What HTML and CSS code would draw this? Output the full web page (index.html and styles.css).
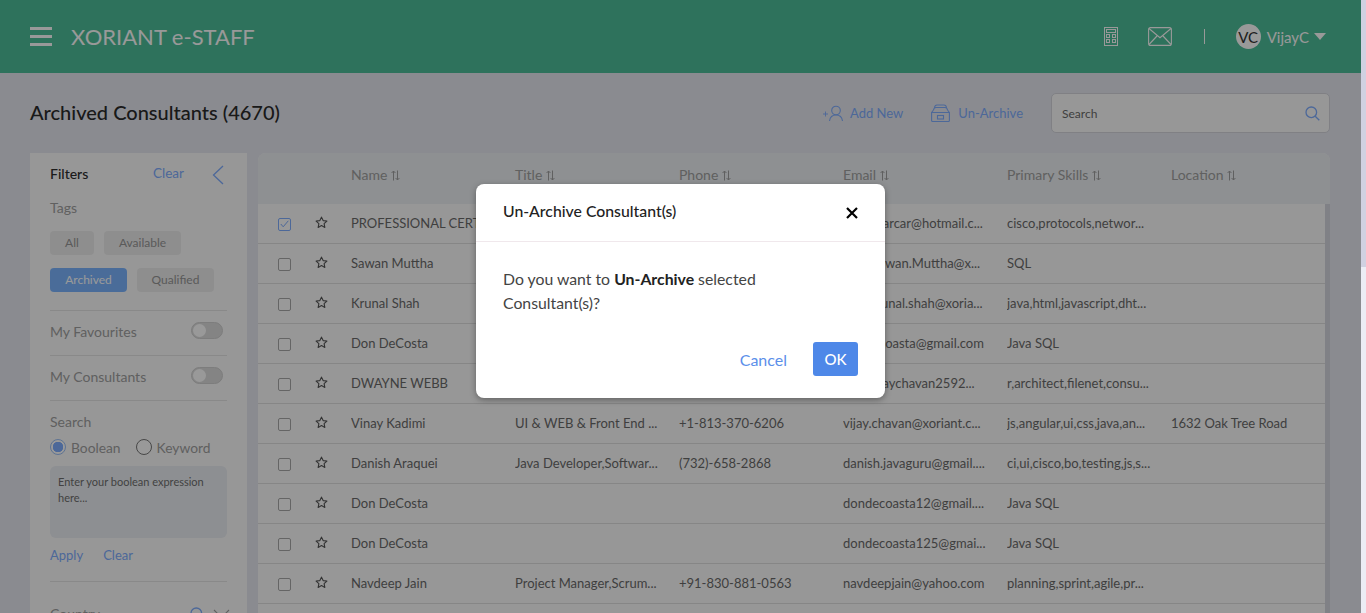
FILE: index.html
```html
<!DOCTYPE html>
<html lang="en">
<head>
<meta charset="utf-8">
<title>Archived Consultants</title>
<link rel="stylesheet" href="styles.css">
</head>
<body>
<svg class="defs" width="0" height="0" aria-hidden="true">
  <symbol id="star" viewBox="0 0 14 14"><path d="M7 1.2l1.75 3.75 4.05.5-3 2.8.8 4.05L7 10.3l-3.6 2 .8-4.05-3-2.8 4.05-.5z" fill="none" stroke="currentColor" stroke-width="1.2" stroke-linejoin="round"/></symbol>
  <symbol id="sort" viewBox="0 0 9 11"><path d="M2.5 10.5V1M.6 3L2.5 1l1.9 2M6.5.5V10M4.6 8l1.9 2 1.9-2" fill="none" stroke="currentColor" stroke-width="1"/></symbol>
</svg>
<div class="frame">
  <div class="main">
    <header class="topbar">
      <div class="burger"><span></span><span></span><span></span></div>
      <div class="brand">XORIANT e-STAFF</div>
      <div class="top-actions">
        <svg class="calc" width="14" height="19" viewBox="0 0 14 19"><g fill="none" stroke="currentColor"><rect x=".5" y=".5" width="13" height="18"/><rect x="2.5" y="2.5" width="9" height="3"/><rect x="2.5" y="7.5" width="3" height="3"/><rect x="8.5" y="7.5" width="3" height="3"/><rect x="2.5" y="12.5" width="3" height="3"/><rect x="8.5" y="12.5" width="3" height="3"/></g></svg>
        <svg class="mail" width="24" height="19" viewBox="0 0 24 19"><g fill="none" stroke="currentColor" stroke-width="1.1"><rect x=".6" y=".6" width="22.8" height="17.8" rx="2"/><path d="M1 1.5l11 9.2 11-9.2M1 17.5l8-8.5M23 17.5l-8-8.5"/></g></svg>
        <span class="sep"></span>
        <span class="avatar">VC</span>
        <span class="user">VijayC</span>
        <span class="caret"></span>
      </div>
    </header>

    <section class="titlebar">
      <h1>Archived Consultants (4670)</h1>
      <div class="tools">
        <a class="tool tool-add">
          <svg width="23" height="17" viewBox="0 0 23 17"><g fill="none" stroke="currentColor" stroke-width="1.1"><path d="M0 9h5M2.500 6.500v5" stroke-width=".9"/><circle cx="13" cy="5.5" r="4.3"/><path d="M6.5 16c.5-4 3-6 6.5-6s6 2 6.5 6"/></g></svg>
          <span>Add New</span>
        </a>
        <a class="tool tool-arch">
          <svg width="19" height="18" viewBox="0 0 19 18"><g fill="none" stroke="currentColor" stroke-width="1.1"><path d="M3.5 3.5C3.8 1.7 4.5 1 6 1h7c1.500 0 2.200.7 2.500 2.500M2.500 6C2.800 4.200 3.500 3.500 5 3.500h9c1.500 0 2.200.7 2.500 2.500"/><path d="M.6 8.500h17.800v8a1 1 0 0 1-1 1H1.600a1 1 0 0 1-1-1zM.6 8.500L2.500 6M18.400 8.500L16.500 6"/><rect x="6.500" y="11.500" width="6" height="3.500"/></g></svg>
          <span>Un-Archive</span>
        </a>
        <label class="search">
          <span class="search-ph">Search</span>
          <svg width="15" height="15" viewBox="0 0 15 15"><g fill="none" stroke="currentColor" stroke-width="1.300"><circle cx="6.300" cy="6.300" r="5.300"/><path d="M10.200 10.200L14.300 14.300"/></g></svg>
        </label>
      </div>
    </section>

    <div class="content">
      <aside class="filters">
        <div class="f-head">
          <span class="f-title">Filters</span>
          <a class="link f-clear">Clear</a>
          <svg class="f-back" width="12" height="20" viewBox="0 0 12 20"><path d="M11 1L1.500 10 11 19" fill="none" stroke="currentColor" stroke-width="1.300"/></svg>
        </div>
        <div class="f-label tags-label">Tags</div>
        <div class="chips">
          <span class="chip chip-all">All</span>
          <span class="chip chip-wide">Available</span>
          <span class="chip chip-wide chip-on">Archived</span>
          <span class="chip chip-wide">Qualified</span>
        </div>
        <div class="f-row first">
          <span>My Favourites</span><span class="toggle"></span>
        </div>
        <div class="f-row">
          <span>My Consultants</span><span class="toggle"></span>
        </div>
        <div class="f-search">
          <div class="f-label">Search</div>
          <div class="radios">
            <span class="radio radio-on"></span><span class="radio-text">Boolean</span>
            <span class="radio radio-second"></span><span class="radio-text">Keyword</span>
          </div>
          <div class="bool-box">Enter your boolean expression here...</div>
          <div class="f-actions"><a class="link">Apply</a><a class="link">Clear</a></div>
        </div>
        <div class="f-country">
          <span class="f-label country-label">Country</span>
          <svg class="c-search" width="15" height="15" viewBox="0 0 15 15"><g fill="none" stroke="currentColor" stroke-width="1.300"><circle cx="6.300" cy="6.300" r="5.300"/><path d="M10.200 10.200L14.300 14.300"/></g></svg>
          <svg class="c-chev" width="17" height="10" viewBox="0 0 17 10"><path d="M1 1l7.500 7.500L16 1" fill="none" stroke="currentColor" stroke-width="1.100"/></svg>
        </div>
      </aside>

      <section class="table">
        <div class="thead">
          <span></span>
          <span>Name <svg class="sort"><use href="#sort"/></svg></span>
          <span>Title <svg class="sort"><use href="#sort"/></svg></span>
          <span>Phone <svg class="sort"><use href="#sort"/></svg></span>
          <span>Email <svg class="sort"><use href="#sort"/></svg></span>
          <span>Primary Skills <svg class="sort"><use href="#sort"/></svg></span>
          <span>Location <svg class="sort"><use href="#sort"/></svg></span>
        </div>
        <div class="tbody">
          <div class="rows">
            <div class="row"><span class="lead"><span class="check check-on"><svg width="9" height="8" viewBox="0 0 9 8"><path d="M.8 4l2.400 2.800L8.300.8" fill="none" stroke="currentColor"/></svg></span><svg class="star"><use href="#star"/></svg></span><span>PROFESSIONAL CERTIFI...</span><span></span><span></span><span>samrvsarcar@hotmail.c...</span><span>cisco,protocols,networ...</span><span></span></div>
            <div class="row"><span class="lead"><span class="check"></span><svg class="star"><use href="#star"/></svg></span><span>Sawan Muttha</span><span></span><span></span><span>soniasawan.Muttha@x...</span><span>SQL</span><span></span></div>
            <div class="row"><span class="lead"><span class="check"></span><svg class="star"><use href="#star"/></svg></span><span>Krunal Shah</span><span></span><span></span><span>shahkrunal.shah@xoria...</span><span>java,html,javascript,dht...</span><span></span></div>
            <div class="row"><span class="lead"><span class="check"></span><svg class="star"><use href="#star"/></svg></span><span>Don DeCosta</span><span></span><span></span><span>dondecoasta@gmail.com</span><span>Java SQL</span><span></span></div>
            <div class="row"><span class="lead"><span class="check"></span><svg class="star"><use href="#star"/></svg></span><span>DWAYNE WEBB</span><span></span><span></span><span>shahvijaychavan2592...</span><span>r,architect,filenet,consu...</span><span></span></div>
            <div class="row"><span class="lead"><span class="check"></span><svg class="star"><use href="#star"/></svg></span><span>Vinay Kadimi</span><span>UI &amp; WEB &amp; Front End ...</span><span>+1-813-370-6206</span><span>vijay.chavan@xoriant.c...</span><span>js,angular,ui,css,java,an...</span><span>1632 Oak Tree Road</span></div>
            <div class="row"><span class="lead"><span class="check"></span><svg class="star"><use href="#star"/></svg></span><span>Danish Araquei</span><span>Java Developer,Softwar...</span><span>(732)-658-2868</span><span>danish.javaguru@gmail....</span><span>ci,ui,cisco,bo,testing,js,s...</span><span></span></div>
            <div class="row"><span class="lead"><span class="check"></span><svg class="star"><use href="#star"/></svg></span><span>Don DeCosta</span><span></span><span></span><span>dondecoasta12@gmail....</span><span>Java SQL</span><span></span></div>
            <div class="row"><span class="lead"><span class="check"></span><svg class="star"><use href="#star"/></svg></span><span>Don DeCosta</span><span></span><span></span><span>dondecoasta125@gmai...</span><span>Java SQL</span><span></span></div>
            <div class="row"><span class="lead"><span class="check"></span><svg class="star"><use href="#star"/></svg></span><span>Navdeep Jain</span><span>Project Manager,Scrum...</span><span>+91-830-881-0563</span><span>navdeepjain@yahoo.com</span><span>planning,sprint,agile,pr...</span><span></span></div>
          </div>
          <div class="tscroll"></div>
        </div>
      </section>
    </div>

    <div class="overlay">
      <div class="modal">
        <div class="m-head">
          <span class="m-title">Un-Archive Consultant(s)</span>
          <svg class="m-close" width="12" height="12" viewBox="0 0 12 12"><path d="M1 1l10 10M11 1L1 11" fill="none" stroke="currentColor" stroke-width="2.200"/></svg>
        </div>
        <div class="m-body">Do you want to <b>Un-Archive</b> selected Consultant(s)?</div>
        <div class="m-foot">
          <a class="m-cancel">Cancel</a>
          <button class="m-ok" type="button">OK</button>
        </div>
      </div>
    </div>
  </div>
  <div class="pagebar"><div class="pagethumb"></div></div>
</div>
</body>
</html>
```

FILE: styles.css
```css
* { box-sizing: border-box; }
html, body { margin: 0; height: 100%; overflow: hidden; }
body { font-family: Lato, "Liberation Sans", sans-serif; color: #444; }
.defs { position: absolute; }
a { text-decoration: none; }

.frame { display: flex; height: 613px; }
.main { position: relative; width: 1361px; height: 613px; overflow: hidden; background: #e6e8f0; }

.pagebar { width: 5px; background: #ecedf5; }
.pagethumb { height: 267px; background: #d0d1e1; }

/* top bar */
.topbar { display: flex; align-items: center; height: 73px; padding-left: 30px; background: #4ebe99; color: #fff; }
.burger { display: flex; flex-direction: column; justify-content: space-between; width: 22px; height: 19px; }
.burger span { display: block; height: 3px; background: #fff; }
.brand { margin-left: 19px; font-size: 22px; }
.top-actions { display: flex; align-items: center; margin-left: auto; padding-right: 35px; }
.calc { margin-right: 30px; }
.mail { margin-right: 32px; }
.sep { width: 1px; height: 15px; margin-right: 31px; background: #fff; }
.avatar { display: flex; align-items: center; justify-content: center; width: 25px; height: 25px; border-radius: 50%; background: #fff; color: #333; font-size: 15px; }
.user { margin-left: 6px; font-size: 15px; }
.caret { width: 0; height: 0; margin-left: 5px; border: 6px solid transparent; border-top: 7px solid #fff; border-bottom: 0; }

/* title row */
.titlebar { display: flex; align-items: center; justify-content: space-between; height: 80px; padding: 0 31px 0 30px; }
h1 { margin: -2px 0 0; font-size: 20px; font-weight: 500; color: #2b2b2b; }
.tools { display: flex; align-items: center; }
.tool { display: flex; align-items: center; font-size: 13px; color: #7fadff; }
.tool-add span { margin-left: 4px; }
.tool-add { margin-right: 28px; }
.tool-arch span { margin-left: 8px; }
.tool-arch { margin-right: 28px; }
.search { display: flex; align-items: center; justify-content: space-between; width: 279px; height: 40px; padding: 0 9px 0 10px; background: #fcfcfc; border: 1px solid #d5d6dd; border-radius: 5px; color: #7fadff; }
.search-ph { font-size: 12px; color: #6a6a6a; }

/* layout */
.content { display: flex; gap: 11px; padding: 0 31px 0 30px; }

/* filters */
.filters { flex: 0 0 217px; height: 480px; padding: 0 20px; background: #fcfcfc; }
.f-head { display: flex; align-items: center; height: 42px; padding-bottom: 2px; }
.f-title { font-size: 14px; font-weight: 500; color: #2e2e2e; }
.link { font-size: 13px; color: #7fadff; }
.f-clear { margin-left: auto; font-size: 13.5px; }
.f-back { margin: 4px 3px 0 28px; color: #7fadff; }
.f-label { font-size: 14px; color: #a0a0a0; }
.tags-label { line-height: 18px; margin-top: 4px; }
.chips { display: flex; flex-wrap: wrap; gap: 13px 10px; margin-top: 14px; }
.chip { display: flex; align-items: center; justify-content: center; height: 24px; padding-bottom: 2px; border-radius: 4px; background: #ededed; font-size: 12px; color: #969696; }
.chip-all { width: 44px; }
.chip-wide { width: 77px; }
.chip-on { background: #7cb5ff; color: #fff; }
.f-row { display: flex; align-items: center; justify-content: space-between; height: 45px; padding: 0 4px 4px 0; border-top: 1px solid #e4e4e4; font-size: 14px; color: #a0a0a0; }
.f-row.first { margin-top: 18px; }
.toggle { position: relative; width: 32px; height: 17px; margin-top: -1px; border-radius: 9px; background: #dcdcdc; border: 1px solid #d0d0d0; }
.toggle::after { content: ""; position: absolute; left: 1px; top: 1px; width: 13px; height: 13px; border-radius: 50%; background: #fff; }
.f-search { border-top: 1px solid #e4e4e4; padding-top: 12px; }
.f-search .f-label { line-height: 18px; }
.radios { display: flex; align-items: center; height: 20px; margin-top: 6px; font-size: 13.800px; color: #a0a0a0; }
.radio { width: 16px; height: 16px; border-radius: 50%; border: 1px solid #777; background: #fff; }
.radio-on { border-color: #9cc0f5; background: radial-gradient(circle, #7fadff 0 5px, #fff 5.500px); }
.radio-second { margin-left: 15px; }
.radio-text { margin-left: 5px; }
.bool-box { height: 72px; margin-top: 9px; padding: 8px; background: #ebeef3; border-radius: 6px; font-size: 11px; line-height: 16px; color: #6e6e6e; }
.f-actions { display: flex; gap: 20px; height: 35px; margin-top: 9px; line-height: 17px; border-bottom: 1px solid #e4e4e4; }
.f-country { display: flex; align-items: center; margin-top: 22px; height: 20px; }
.country-label { margin-top: -2px; }
.c-search { margin-left: auto; color: #7fadff; }
.c-chev { margin-left: 8px; margin-right: -3px; color: #a0a0a0; }

/* table */
.table { flex: 1 1 auto; height: 480px; border-radius: 8px 8px 0 0; overflow: hidden; background: #fcfcfc; }
.thead, .row { display: grid; grid-template-columns: 93px repeat(5, 164px) minmax(0, 1fr); align-items: center; }
.thead { height: 51px; padding-bottom: 9px; background: #edf0f3; font-size: 14px; color: #a0a0a0; }
.sort { width: 9px; height: 11px; vertical-align: -1px; color: #a0a0a0; }
.tbody { display: flex; height: 429px; }
.rows { flex: 1 1 auto; min-width: 0; }
.tscroll { flex: 0 0 5px; background: #d5d7e0; }
.row { height: 40px; padding-bottom: 2px; border-bottom: 1px solid #dfdfdf; font-size: 13px; color: #6a6a6a; white-space: nowrap; overflow: hidden; }
.row > span { overflow: hidden; }
.lead { display: flex; align-items: center; padding-left: 20px; }
.check { display: flex; align-items: center; justify-content: center; width: 13px; height: 13px; margin-top: 3px; border: 1px solid #a8a8a8; border-radius: 2px; background: #fff; }
.check-on { border-color: #7fadff; color: #7fadff; }
.star { width: 13px; height: 13px; margin-left: 24px; color: #555; }

/* modal */
.overlay { position: absolute; inset: 0; display: flex; align-items: flex-start; justify-content: center; padding-top: 184px; background: rgba(0, 0, 0, .4); }
.modal { width: 409px; height: 214px; background: #fff; border-radius: 8px; box-shadow: 0 2px 6px rgba(0, 0, 0, .35); }
.m-head { display: flex; align-items: center; justify-content: space-between; height: 58px; padding: 0 27px; border-bottom: 1px solid #f0e8ec; }
.m-title { margin-top: -5px; font-size: 15.800px; font-weight: 500; color: #222; }
.m-close { color: #000; }
.m-body { padding: 25px 40px 0 27px; font-size: 15.800px; line-height: 24px; color: #444; }
.m-body b { font-weight: 700; color: #222; }
.m-foot { display: flex; align-items: center; justify-content: flex-end; margin-top: 27px; padding-right: 27px; }
.m-cancel { margin-right: 26px; font-size: 16px; color: #5b8fea; }
.m-ok { width: 45px; height: 34px; padding: 0; border: 0; border-radius: 3px; background: #4e88e8; color: #fff; font: 500 15px Lato, "Liberation Sans", sans-serif; }
```
